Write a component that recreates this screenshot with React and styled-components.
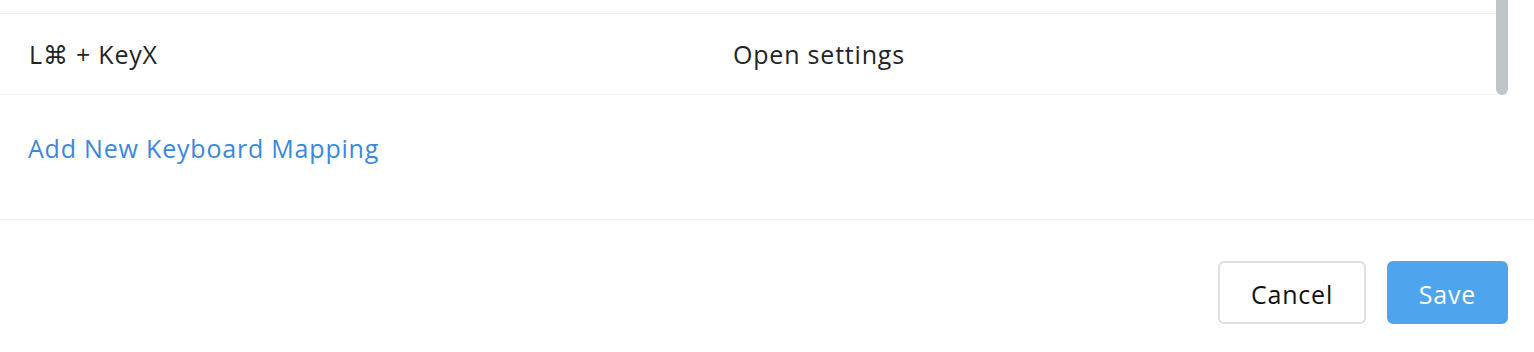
import React from "react";
import styled, { createGlobalStyle } from "styled-components";

const GlobalStyle = createGlobalStyle`
  html, body {
    margin: 0;
    padding: 0;
    background: #fff;
  }
  body {
    font-family: "Open Sans", Lato, "Liberation Sans", sans-serif;
    color: #222428;
  }
`;

const mappings = [{ keys: "L⌘ + KeyX", action: "Open settings" }];

export default function App() {
  return (
    <>
      <GlobalStyle />
      <Panel>
        <ListArea>
          <Rows>
            {mappings.map((m) => (
              <Row key={m.keys}>
                <Cell>{m.keys}</Cell>
                <Cell>{m.action}</Cell>
              </Row>
            ))}
          </Rows>
          <ScrollTrack>
            <ScrollThumb />
          </ScrollTrack>
        </ListArea>
        <AddSection>
          <AddLink href="#">Add New Keyboard Mapping</AddLink>
        </AddSection>
        <Footer>
          <Button>Cancel</Button>
          <Button primary>Save</Button>
        </Footer>
      </Panel>
    </>
  );
}

const Panel = styled.div`
  display: flex;
  flex-direction: column;
  width: 100%;
`;

const ListArea = styled.div`
  display: flex;
  height: 95px;
  padding-right: 26px;
`;

const Rows = styled.div`
  flex: 1;
  display: flex;
  flex-direction: column;
  justify-content: flex-end;
  overflow: hidden;
`;

const Row = styled.div`
  flex-shrink: 0;
  display: grid;
  grid-template-columns: 704px 1fr;
  align-items: center;
  height: 80px;
  padding-left: 29px;
  border-top: 1px solid #f0f1f2;
  border-bottom: 1px solid #f0f1f2;
`;

const Cell = styled.div`
  font-size: 25px;
  line-height: 30px;
  letter-spacing: 0.8px;
  color: #222428;
`;

const ScrollTrack = styled.div`
  width: 12px;
  display: flex;
`;

const ScrollThumb = styled.div`
  flex: 1;
  background: #bec6c9;
  border-radius: 0 0 6px 6px;
`;

const AddSection = styled.div`
  padding: 38px 28px 56px;
  border-bottom: 1px solid #f0f1f2;
`;

const AddLink = styled.a`
  font-size: 25px;
  line-height: 30px;
  letter-spacing: 0.8px;
  color: #3a89d9;
  text-decoration: none;
`;

const Footer = styled.div`
  display: flex;
  justify-content: flex-end;
  gap: 21px;
  padding: 41px 26px 27px 0;
`;

const Button = styled.button`
  font-family: inherit;
  font-size: 25px;
  letter-spacing: 0.8px;
  height: 63px;
  width: ${(p) => (p.primary ? "121px" : "148px")};
  padding: 2px 0 0;
  border-radius: 6px;
  cursor: pointer;
  border: 2px solid ${(p) => (p.primary ? "#4fa5ed" : "#dcdfe3")};
  background: ${(p) => (p.primary ? "#4fa5ed" : "#fff")};
  color: ${(p) => (p.primary ? "#fff" : "#111")};
`;
